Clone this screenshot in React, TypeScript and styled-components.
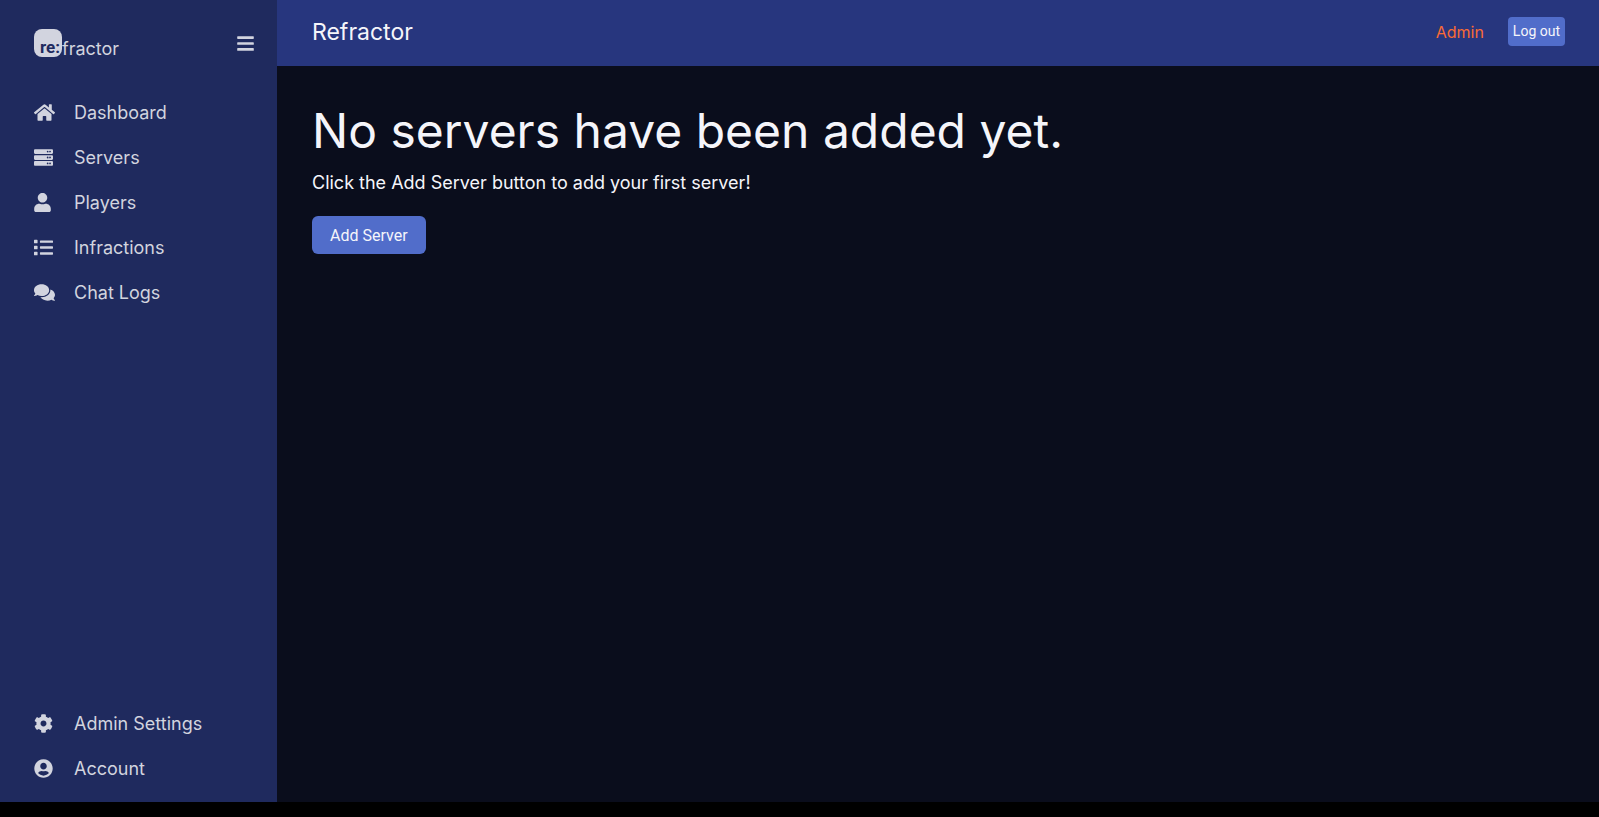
import React from "react";
import styled, { createGlobalStyle } from "styled-components";
import {
  FaBars,
  FaCog,
  FaComments,
  FaHome,
  FaList,
  FaServer,
  FaUser,
  FaUserCircle,
} from "react-icons/fa";
import type { IconType } from "react-icons";

const colors = {
  sidebar: "#1f2a5e",
  header: "#27367e",
  page: "#0a0d1c",
  primary: "#516dca",
  accent: "#fa6b35",
  muted: "#d2d4df",
  text: "#f5f5fa",
};

const GlobalStyle = createGlobalStyle`
  * { box-sizing: border-box; }
  body {
    margin: 0;
    background: #000;
    color: ${colors.text};
    font-family: Inter, sans-serif;
    font-size: 18px;
  }
`;

const Shell = styled.div`
  display: flex;
  min-height: calc(100vh - 15px);
`;

const Sidebar = styled.aside`
  display: flex;
  flex-direction: column;
  flex: 0 0 277px;
  padding: 24px 0 11px;
  background: ${colors.sidebar};
  color: ${colors.muted};
`;

const Brand = styled.div`
  display: flex;
  align-items: center;
  justify-content: space-between;
  height: 38px;
  margin-bottom: 28px;
  padding: 0 22px 0 34px;
`;

const Logo = styled.a`
  display: flex;
  align-items: flex-end;
  color: inherit;
  line-height: 16px;
  text-decoration: none;
`;

const LogoMark = styled.span`
  display: flex;
  align-items: flex-end;
  justify-content: flex-end;
  width: 28px;
  height: 28px;
  padding-right: 2px;
  border-radius: 8px;
  background: ${colors.muted};
  color: ${colors.sidebar};
  font-family: Roboto, sans-serif;
  font-size: 17px;
  font-weight: 700;
  line-height: 20px;
`;

const MenuButton = styled.button`
  display: flex;
  padding: 0;
  border: 0;
  background: none;
  color: inherit;
  font-size: 19px;
  cursor: pointer;
`;

const Nav = styled.nav<{ $bottom?: boolean }>`
  display: flex;
  flex-direction: column;
  margin-top: ${(p) => (p.$bottom ? "auto" : "0")};
`;

const NavLink = styled.a`
  display: flex;
  align-items: center;
  height: 45px;
  padding-left: 34px;
  color: inherit;
  text-decoration: none;
`;

const NavIcon = styled.span<{ $width: number }>`
  display: flex;
  width: 40px;

  svg {
    width: ${(p) => p.$width}px;
    height: 19px;
  }
`;

const Main = styled.div`
  display: flex;
  flex: 1;
  flex-direction: column;
  min-width: 0;
  background: ${colors.page};
`;

const Header = styled.header`
  display: flex;
  align-items: center;
  justify-content: space-between;
  height: 66px;
  padding: 0 34px 3px 35px;
  background: ${colors.header};
`;

const HeaderTitle = styled.div`
  font-size: 23px;
`;

const UserArea = styled.div`
  display: flex;
  align-items: center;
  gap: 24px;
`;

const UserName = styled.span`
  color: ${colors.accent};
  font-size: 16px;
`;

const Button = styled.button<{ $small?: boolean }>`
  height: ${(p) => (p.$small ? "29px" : "38px")};
  padding: ${(p) => (p.$small ? "0 5px 2px" : "0 18px")};
  border: 0;
  border-radius: ${(p) => (p.$small ? "4px" : "6px")};
  background: ${colors.primary};
  color: ${colors.text};
  font-family: Roboto, sans-serif;
  font-size: ${(p) => (p.$small ? "14px" : "16px")};
  cursor: pointer;
`;

const Content = styled.main`
  padding: 34px 35px;
`;

const Title = styled.h1`
  margin: 0;
  font-size: 48px;
  font-weight: 400;
  line-height: 62px;
`;

const Message = styled.p`
  margin: 10px 0 22px;
  line-height: 22px;
`;

interface Item {
  label: string;
  icon: IconType;
  iconWidth: number;
}

const mainItems: Item[] = [
  { label: "Dashboard", icon: FaHome, iconWidth: 21 },
  { label: "Servers", icon: FaServer, iconWidth: 19 },
  { label: "Players", icon: FaUser, iconWidth: 17 },
  { label: "Infractions", icon: FaList, iconWidth: 19 },
  { label: "Chat Logs", icon: FaComments, iconWidth: 21 },
];

const accountItems: Item[] = [
  { label: "Admin Settings", icon: FaCog, iconWidth: 19 },
  { label: "Account", icon: FaUserCircle, iconWidth: 19 },
];

function NavItems({ items }: { items: Item[] }) {
  return (
    <>
      {items.map(({ label, icon: Icon, iconWidth }) => (
        <NavLink href="#" key={label}>
          <NavIcon $width={iconWidth}>
            <Icon aria-hidden />
          </NavIcon>
          {label}
        </NavLink>
      ))}
    </>
  );
}

export default function App() {
  return (
    <>
      <GlobalStyle />
      <Shell>
        <Sidebar>
          <Brand>
            <Logo href="#">
              <LogoMark>re:</LogoMark>fractor
            </Logo>
            <MenuButton type="button" aria-label="Toggle menu">
              <FaBars aria-hidden />
            </MenuButton>
          </Brand>
          <Nav>
            <NavItems items={mainItems} />
          </Nav>
          <Nav $bottom>
            <NavItems items={accountItems} />
          </Nav>
        </Sidebar>
        <Main>
          <Header>
            <HeaderTitle>Refractor</HeaderTitle>
            <UserArea>
              <UserName>Admin</UserName>
              <Button type="button" $small>
                Log out
              </Button>
            </UserArea>
          </Header>
          <Content>
            <Title>No servers have been added yet.</Title>
            <Message>Click the Add Server button to add your first server!</Message>
            <Button type="button">Add Server</Button>
          </Content>
        </Main>
      </Shell>
    </>
  );
}
